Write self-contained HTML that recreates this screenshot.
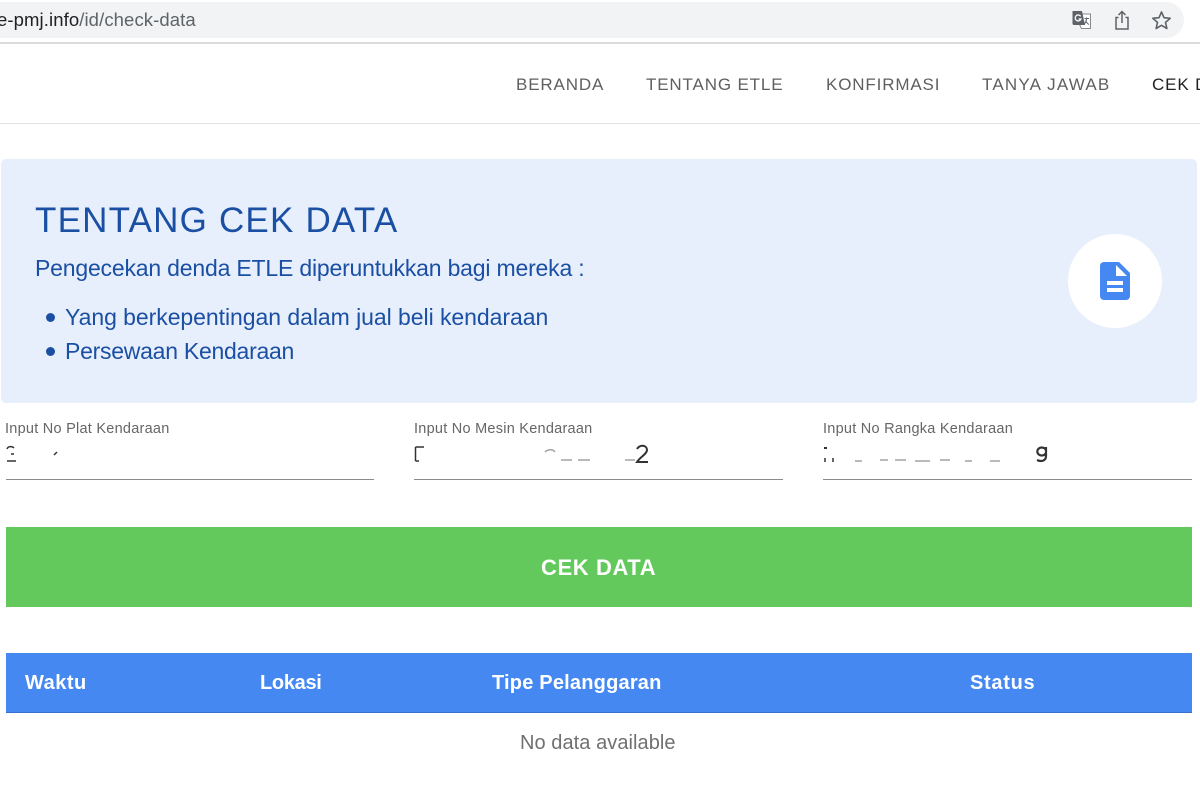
<!DOCTYPE html>
<html lang="id">
<head>
<meta charset="utf-8">
<title>Cek Data</title>
<style>
html,body{margin:0;padding:0;background:#fff}
body{width:1200px;height:800px;position:relative;overflow:hidden;font-family:"Liberation Sans",sans-serif}
.t{position:absolute;white-space:nowrap;line-height:1}
.box{position:absolute}
.nav{top:76px;font-size:17px;letter-spacing:.85px;color:#5f5f5f}
.lab{top:422px;font-size:14.5px;letter-spacing:.25px;color:#666}
.line{position:absolute;top:479px;height:1px;background:#8a8a8a}
.th{top:673px;font-size:20px;font-weight:bold;color:#fff}
</style>
</head>
<body>
<div class="box" style="left:0;top:2px;width:1184px;height:36px;background:#f1f3f4;border-radius:0 18px 18px 0"></div>
<div class="box" style="left:0;top:42px;width:1200px;height:2px;background:#dcdcdc"></div>
<div class="t" style="left:-3px;top:11px;font-size:18.5px;letter-spacing:.1px;color:#202124">e-pmj.info<span style="color:#5f6368">/id/check-data</span></div>
<svg class="box" style="left:1071px;top:10px" width="22" height="20" viewBox="0 0 22 20">
<path d="M9 4H19.500V18.500H10.500L9 15.500Z" fill="#fff" stroke="#8a8a8a"/>
<path d="M1.500 1H11L14 15H3A1.500 1.500 0 0 1 1.500 13.500Z" fill="#5f6368"/>
<path d="M9.700 6.300A3 3 0 1 0 10 9H7.500" fill="none" stroke="#fff" stroke-width="1.300"/>
<path d="M13.500 8.500H18M15.500 7.500V8.500C15.500 11 14.500 13 13 14M14.500 10.500C15 12 16.500 13.500 18 14.500" fill="none" stroke="#5f6368"/>
</svg>
<svg class="box" style="left:1113px;top:10px" width="18" height="21" viewBox="0 0 18 21" fill="none" stroke="#5f6368" stroke-width="1.500">
<path d="M5.500 7.500H3V19H15V7.500H12.500"/>
<path d="M9 13V1.500M5.500 5L9 1.500L12.500 5"/>
</svg>
<svg class="box" style="left:1151px;top:10px" width="21" height="20" viewBox="0 0 21 20" fill="none" stroke="#5f6368" stroke-width="1.600" stroke-linejoin="round">
<path d="M10.500 2L13 7.700L19.200 8.300L14.500 12.400L15.900 18.500L10.500 15.300L5.100 18.500L6.500 12.400L1.800 8.300L8 7.700Z"/>
</svg>

<div class="t nav" style="left:516px">BERANDA</div>
<div class="t nav" style="left:646px">TENTANG ETLE</div>
<div class="t nav" style="left:826px">KONFIRMASI</div>
<div class="t nav" style="left:982px;letter-spacing:1.2px">TANYA JAWAB</div>
<div class="t nav" style="left:1152px;color:#222">CEK DATA</div>
<div class="box" style="left:0;top:123px;width:1200px;height:1px;background:#e3e3e3"></div>

<div class="box" style="left:1px;top:159px;width:1196px;height:244px;background:#e7effc;border-radius:5px"></div>
<div class="t" style="left:35px;top:203px;font-size:35px;letter-spacing:1.2px;color:#1a4fa3">TENTANG CEK DATA</div>
<div class="t" style="left:35px;top:257px;font-size:23px;letter-spacing:-.19px;color:#1a4fa3">Pengecekan denda ETLE diperuntukkan bagi mereka :</div>
<div class="box" style="left:46px;top:313px;width:9px;height:9px;border-radius:50%;background:#1a4fa3"></div>
<div class="t" style="left:65px;top:306px;font-size:23px;letter-spacing:-.05px;color:#1a4fa3">Yang berkepentingan dalam jual beli kendaraan</div>
<div class="box" style="left:46px;top:347px;width:9px;height:9px;border-radius:50%;background:#1a4fa3"></div>
<div class="t" style="left:65px;top:340px;font-size:23px;letter-spacing:-.26px;color:#1a4fa3">Persewaan Kendaraan</div>

<div class="box" style="left:1068px;top:234px;width:94px;height:94px;border-radius:50%;background:#fff"></div>
<svg class="box" style="left:1100px;top:262px" width="30" height="38" viewBox="0 0 30 38">
<path d="M4 0H19L30 11V34A4 4 0 0 1 26 38H4A4 4 0 0 1 0 34V4A4 4 0 0 1 4 0Z" fill="#4688f1"/>
<path d="M16 3V14H27Z" fill="#fff"/>
<rect x="7" y="19" width="16" height="4" fill="#fff"/>
<rect x="7" y="26" width="16" height="4" fill="#fff"/>
</svg>

<div class="t lab" style="left:5px">Input No Plat Kendaraan</div>
<div class="t lab" style="left:414px">Input No Mesin Kendaraan</div>
<div class="t lab" style="left:823px">Input No Rangka Kendaraan</div>
<div class="line" style="left:5.500px;width:368.500px"></div>
<div class="line" style="left:414px;width:369px"></div>
<div class="line" style="left:823px;width:369px"></div>

<svg class="box" style="left:0;top:440px" width="1200" height="30" fill="none" stroke="#333" stroke-width="1.500">
<path d="M7 9C8 6 12 6 14 8M7 21H16M11 14H14M54 15L57 12"/>
<path d="M415.500 7V21M415.500 7H424M415.500 21H419"/>
<path d="M637 9C640 4 647 5 647 10C647 14 640 17 637 22H648" stroke-width="2"/>
<path d="M825 18V22M833 18V22" />
<path d="M1046 10A4.500 4 0 1 0 1046 13M1046 7V16C1046 21 1041 22 1037 20" stroke-width="2.200"/>
<path d="M825.500 7V9" stroke-width="3"/>
<g stroke-opacity=".45">
<path d="M545 12C548 9 553 9 555 12M561 20H572M578 20H590M625 20H635"/>
<path d="M855 21H862M880 20H888M895 20H906M915 21H930M940 20H950M965 21H972M990 21H1000"/>
</g>
</svg>

<div class="box" style="left:5.500px;top:527px;width:1186.500px;height:80px;background:#64c95d"></div>
<div class="t" style="left:541px;top:557px;font-size:22px;font-weight:bold;letter-spacing:.6px;color:#fff">CEK DATA</div>

<div class="box" style="left:5.500px;top:653px;width:1186.500px;height:59px;background:#4688f1;border-bottom:1px solid #3a6fcb"></div>
<div class="t th" style="left:25px;letter-spacing:.5px">Waktu</div>
<div class="t th" style="left:260px;letter-spacing:-.3px">Lokasi</div>
<div class="t th" style="left:492px;letter-spacing:.2px">Tipe Pelanggaran</div>
<div class="t th" style="left:970px;letter-spacing:.7px">Status</div>
<div class="t" style="left:520px;top:733px;font-size:20px;letter-spacing:.06px;color:#707070">No data available</div>
</body>
</html>
